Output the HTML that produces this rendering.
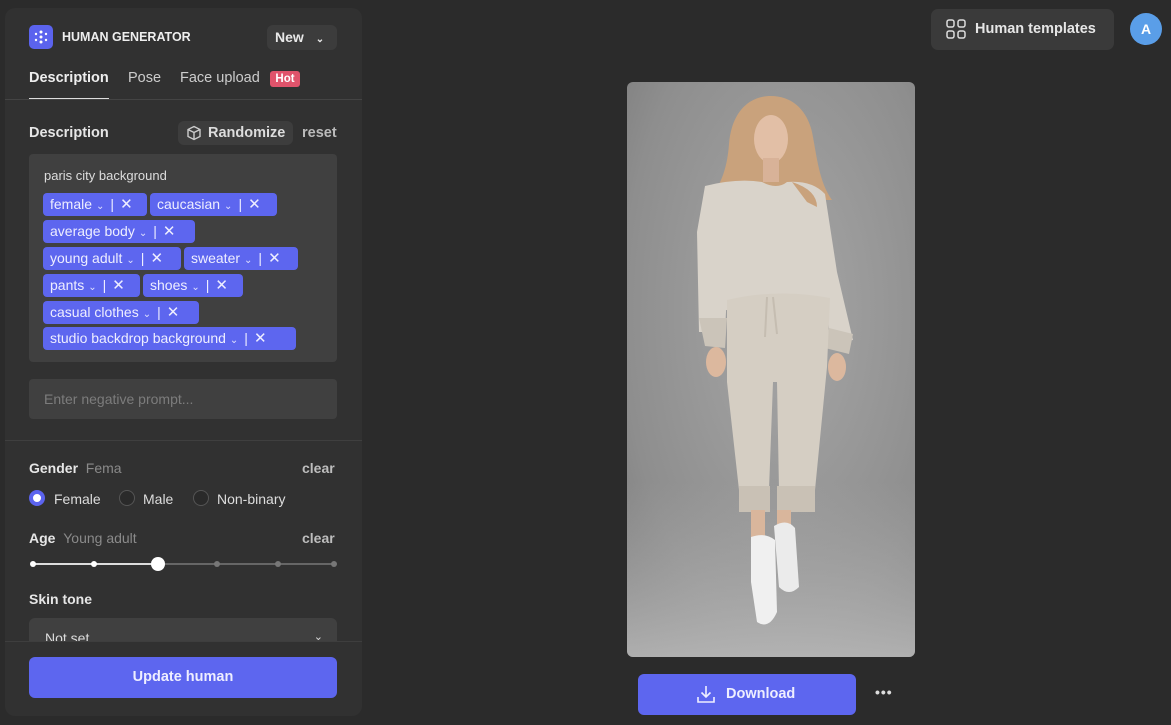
<!DOCTYPE html>
<html><head><meta charset="utf-8"><style>
*{box-sizing:border-box;margin:0;padding:0}
body{width:1171px;height:725px;background:#2b2b2b;font-family:"Liberation Sans",sans-serif;position:relative;overflow:hidden;color:#e8e8e8}
.abs{position:absolute}
.panel{left:5px;top:8px;width:357px;height:708px;background:#313131;border-radius:10px;overflow:hidden}
.chip{position:absolute;height:23px;background:#5d66ef;border-radius:4px;color:#eef;font-size:14px;line-height:23px;padding-left:7px;white-space:nowrap}
.chip .c{font-size:10px;margin:0 6px 0 4px;opacity:.9}
.chip .x{font-size:15px;margin-left:6px}
.lbl{font-size:14px;font-weight:bold;color:#e6e6e6}
.gray{color:#8a8a8a;font-weight:normal}
.clear{font-size:14px;font-weight:bold;color:#bdbdbd}
.radio{width:16px;height:16px;border-radius:50%;border:1.5px solid #555;background:#2a2a2a;position:absolute}
</style></head><body>
<div class="abs panel">
  <div class="abs" style="left:24px;top:17px;width:24px;height:24px;background:#5b63ee;border-radius:5px">
    <svg width="24" height="24"><g fill="#fff"><circle cx="12" cy="7" r="1.5"/><circle cx="12" cy="12" r="1.5"/><circle cx="12" cy="17" r="1.5"/><circle cx="7" cy="9" r="1.2"/><circle cx="17" cy="9" r="1.2"/><circle cx="7" cy="15" r="1.2"/><circle cx="17" cy="15" r="1.2"/></g></svg>
  </div>
  <div class="abs" style="left:57px;top:22px;font-size:12.5px;font-weight:bold;color:#eee">HUMAN GENERATOR</div>
  <div class="abs" style="left:262px;top:17px;width:70px;height:25px;background:#3c3c3c;border-radius:6px;font-size:14px;font-weight:bold;line-height:25px;padding-left:8px">New <span style="font-size:10px;margin-left:8px">&#8964;</span></div>
  <div class="abs" style="left:24px;top:62px;font-size:14.5px;font-weight:bold;color:#eee">Description</div>
  <div class="abs" style="left:24px;top:90px;width:80px;height:2px;background:#ddd"></div>
  <div class="abs" style="left:123px;top:62px;font-size:14.5px;color:#ccc">Pose</div>
  <div class="abs" style="left:175px;top:62px;font-size:14.5px;color:#ccc">Face upload</div>
  <div class="abs" style="left:265px;top:63px;width:30px;height:16px;background:#e0536b;border-radius:3px;font-size:11.5px;font-weight:bold;line-height:16px;text-align:center;color:#fff">Hot</div>
  <div class="abs" style="left:0;top:91px;width:357px;height:1px;background:#444"></div>
  <div class="abs lbl" style="left:24px;top:117px;font-size:14.5px">Description</div>
  <div class="abs" style="left:173px;top:113px;width:115px;height:24px;background:#3d3d3d;border-radius:6px;font-size:14.5px;font-weight:bold;line-height:24px;padding-left:30px;color:#ddd">Randomize</div>
  <svg class="abs" style="left:181px;top:117px" width="16" height="16" fill="none" stroke="#ccc" stroke-width="1.4"><path d="M8 1.5L14 4.5V11.5L8 14.5L2 11.5V4.5Z M2 4.5L8 7.5L14 4.5 M8 7.5V14.5"/></svg>
  <div class="abs" style="left:297px;top:117px;font-size:14.5px;font-weight:bold;color:#bbb">reset</div>
  <div class="abs" style="left:24px;top:146px;width:308px;height:208px;background:#404040;border-radius:4px">
    <div class="abs" style="left:15px;top:14px;font-size:13px;color:#ddd">paris city background</div>
    <div class="chip" style="left:14px;top:39px;width:104px">female<span class="c">&#8964;</span>|<span class="x">✕</span></div>
    <div class="chip" style="left:121px;top:39px;width:127px">caucasian<span class="c">&#8964;</span>|<span class="x">✕</span></div>
    <div class="chip" style="left:14px;top:66px;width:152px">average body<span class="c">&#8964;</span>|<span class="x">✕</span></div>
    <div class="chip" style="left:14px;top:93px;width:138px">young adult<span class="c">&#8964;</span>|<span class="x">✕</span></div>
    <div class="chip" style="left:155px;top:93px;width:114px">sweater<span class="c">&#8964;</span>|<span class="x">✕</span></div>
    <div class="chip" style="left:14px;top:120px;width:97px">pants<span class="c">&#8964;</span>|<span class="x">✕</span></div>
    <div class="chip" style="left:114px;top:120px;width:100px">shoes<span class="c">&#8964;</span>|<span class="x">✕</span></div>
    <div class="chip" style="left:14px;top:147px;width:156px">casual clothes<span class="c">&#8964;</span>|<span class="x">✕</span></div>
    <div class="chip" style="left:14px;top:173px;width:253px">studio backdrop background<span class="c">&#8964;</span>|<span class="x">✕</span></div>
  </div>
  <div class="abs" style="left:24px;top:371px;width:308px;height:40px;background:#404040;border-radius:4px;font-size:14px;color:#7c7c7c;line-height:40px;padding-left:15px">Enter negative prompt...</div>
  <div class="abs" style="left:0;top:432px;width:357px;height:1px;background:#3f3f3f"></div>
  <div class="abs lbl" style="left:24px;top:452px">Gender <span class="gray">&nbsp;Fema</span></div>
  <div class="abs clear" style="left:297px;top:452px">clear</div>
  <div class="radio" style="left:24px;top:482px;background:#fff;border:4px solid #5b63ee"></div>
  <div class="abs" style="left:49px;top:483px;font-size:14px;color:#ddd">Female</div>
  <div class="radio" style="left:114px;top:482px"></div>
  <div class="abs" style="left:138px;top:483px;font-size:14px;color:#ddd">Male</div>
  <div class="radio" style="left:188px;top:482px"></div>
  <div class="abs" style="left:212px;top:483px;font-size:14px;color:#ddd">Non-binary</div>
  <div class="abs lbl" style="left:24px;top:522px">Age <span class="gray">&nbsp;Young adult</span></div>
  <div class="abs clear" style="left:297px;top:522px">clear</div>
  <div class="abs" style="left:28px;top:555px;width:125px;height:2px;background:#ddd"></div>
  <div class="abs" style="left:153px;top:555px;width:178px;height:2px;background:#666"></div>
  <div class="abs" style="left:25px;top:553px;width:6px;height:6px;border-radius:50%;background:#fff"></div>
  <div class="abs" style="left:86px;top:553px;width:6px;height:6px;border-radius:50%;background:#fff"></div>
  <div class="abs" style="left:146px;top:549px;width:14px;height:14px;border-radius:50%;background:#fff"></div>
  <div class="abs" style="left:209px;top:553px;width:6px;height:6px;border-radius:50%;background:#777"></div>
  <div class="abs" style="left:270px;top:553px;width:6px;height:6px;border-radius:50%;background:#777"></div>
  <div class="abs" style="left:326px;top:553px;width:6px;height:6px;border-radius:50%;background:#777"></div>
  <div class="abs lbl" style="left:24px;top:583px">Skin tone</div>
  <div class="abs" style="left:24px;top:610px;width:308px;height:30px;background:#404040;border-radius:6px 6px 0 0;font-size:14px;color:#ddd;padding:12px 0 0 16px">Not set<span style="position:absolute;right:14px;top:12px;font-size:11px">&#8964;</span></div>
  <div class="abs" style="left:0;top:633px;width:357px;height:75px;background:#313131;border-top:1px solid #3e3e3e"></div>
  <div class="abs" style="left:24px;top:649px;width:308px;height:41px;background:#5d66ef;border-radius:6px;font-size:14.5px;font-weight:bold;color:#eef;text-align:center;line-height:41px">Update human</div>
</div>

<div class="abs" style="left:931px;top:9px;width:183px;height:41px;background:#3a3a3a;border-radius:7px;font-size:14.5px;font-weight:bold;color:#e6e6e6;line-height:41px;padding-left:44px">Human templates</div>
<svg class="abs" style="left:946px;top:19px" width="20" height="20" fill="none" stroke="#ddd" stroke-width="1.5"><rect x="1" y="1" width="7" height="7" rx="2"/><rect x="12" y="1" width="7" height="7" rx="2"/><rect x="1" y="12" width="7" height="7" rx="2"/><rect x="12" y="12" width="7" height="7" rx="2"/></svg>
<div class="abs" style="left:1130px;top:13px;width:32px;height:32px;border-radius:50%;background:#5a9ee8;color:#fff;font-size:14px;font-weight:bold;text-align:center;line-height:32px">A</div>

<svg class="abs" style="left:627px;top:82px" width="288" height="575" viewBox="0 0 288 575">
  <defs>
    <radialGradient id="bg" cx="55%" cy="40%" r="80%"><stop offset="0" stop-color="#a6a6a6"/><stop offset=".7" stop-color="#8e8e8e"/><stop offset="1" stop-color="#7a7a7a"/></radialGradient>
    <linearGradient id="fl" x1="0" y1="0" x2="0" y2="1"><stop offset="0" stop-color="#b0b0b0" stop-opacity="0"/><stop offset="1" stop-color="#bcbcbc" stop-opacity=".8"/></linearGradient>
    <clipPath id="cp"><rect width="288" height="575" rx="6"/></clipPath>
  </defs>
  <g clip-path="url(#cp)">
  <rect width="288" height="575" fill="url(#bg)"/>
  <rect y="400" width="288" height="175" fill="url(#fl)"/>
  <path d="M144 14 C118 14 104 35 102 62 C100 90 92 105 82 118 L205 118 C192 100 190 75 185 50 C180 28 165 14 144 14Z" fill="#c9a27c"/>
  <ellipse cx="144" cy="57" rx="17" ry="24" fill="#e2bfa6"/>
  <rect x="136" y="76" width="16" height="24" fill="#d8b298"/>
  <path d="M78 104 Q110 96 135 100 Q150 108 160 100 Q185 98 198 112 L210 190 L226 258 L204 262 L198 215 L200 228 L98 228 L100 210 L98 250 L72 250 L70 150Z" fill="#d9d3ca"/>
  <path d="M165 100 Q190 108 190 125 L180 120Z" fill="#c9a27c"/>
  <path d="M72 236 L100 236 L98 266 L78 264Z" fill="#cbc4b9"/>
  <path d="M202 246 L226 252 L222 272 L198 266Z" fill="#cbc4b9"/>
  <ellipse cx="89" cy="280" rx="10" ry="15" fill="#dcb89e"/>
  <ellipse cx="210" cy="285" rx="9" ry="14" fill="#dcb89e"/>
  <path d="M100 218 Q150 206 203 216 L200 285 L188 408 L152 408 L150 300 L146 300 L142 408 L112 408 L100 300Z" fill="#d5cec3"/>
  <path d="M140 215 L138 255 M146 215 L150 252" stroke="#c5bdb1" stroke-width="2"/>
  <rect x="112" y="404" width="31" height="26" fill="#c9c1b5"/>
  <rect x="150" y="404" width="38" height="26" fill="#c9c1b5"/>
  <rect x="124" y="428" width="14" height="34" fill="#d9b69c"/>
  <rect x="150" y="428" width="14" height="22" fill="#d9b69c"/>
  <path d="M124 455 Q138 450 148 458 L150 530 Q142 548 130 540 L124 500Z" fill="#f0f0f0"/>
  <path d="M147 444 Q160 436 168 446 L172 505 Q162 515 152 505Z" fill="#ebebeb"/>
  </g>
</svg>

<div class="abs" style="left:638px;top:674px;width:218px;height:41px;background:#5d66ef;border-radius:6px;font-size:14.5px;font-weight:bold;color:#eef;line-height:41px;padding-left:88px">Download</div>
<svg class="abs" style="left:696px;top:684px" width="20" height="20" fill="none" stroke="#eef" stroke-width="1.6"><path d="M10 2V13 M5.5 8.5L10 13L14.5 8.5 M2 13V18H18V13"/></svg>
<div class="abs" style="left:875px;top:684px;font-size:14px;font-weight:bold;color:#ddd;letter-spacing:1px">•••</div>
</body></html>
